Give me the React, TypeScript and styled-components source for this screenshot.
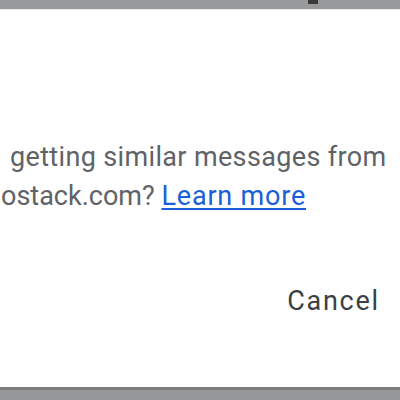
import React from "react";
import styled, { createGlobalStyle } from "styled-components";

const Global = createGlobalStyle`
  html, body { margin: 0; padding: 0; background: #ffffff; }
  body { font-family: Roboto, "Noto Sans", Arial, sans-serif; }
`;

const Page = styled.div`
  width: 400px;
  height: 400px;
  overflow: hidden;
  display: flex;
  flex-direction: column;
  background: #ffffff;
`;

const TopBar = styled.div`
  height: 9px;
  flex: none;
  background: #98999b;
  position: relative;
  border-bottom: 1px solid #e6e6e6;
`;

const TopMark = styled.div`
  position: absolute;
  left: 308px;
  top: 0;
  width: 10px;
  height: 4px;
  background: #3a3a3a;
`;

const Dialog = styled.div`
  flex: 1;
  display: flex;
  flex-direction: column;
  background: #ffffff;
`;

const Message = styled.div`
  margin-top: 128px;
  display: flex;
  flex-direction: column;
  font-size: 27px;
  line-height: 39px;
  color: #5f6368;
  white-space: nowrap;
`;

const Line = styled.div<{ $indent: number; $spacing: number }>`
  padding-left: ${(p) => p.$indent}px;
  letter-spacing: ${(p) => p.$spacing}px;
`;

const Link = styled.a`
  color: #1a5fd9;
  text-decoration: underline;
  text-decoration-thickness: 2px;
  text-underline-offset: 3px;
  letter-spacing: 0.8px;
`;

const Actions = styled.div`
  margin-top: 66px;
  display: flex;
  justify-content: flex-end;
  padding-right: 22px;
`;

const CancelButton = styled.button`
  border: none;
  background: transparent;
  padding: 0;
  font-family: Roboto, "Noto Sans", Arial, sans-serif;
  font-size: 27px;
  line-height: 39px;
  letter-spacing: 1.7px;
  margin-right: -1.7px;
  color: #3c4043;
  cursor: pointer;
`;

const BottomBar = styled.div`
  height: 13px;
  flex: none;
  background: #97989a;
  border-top: 3px solid #7c7d7f;
  box-sizing: border-box;
`;

export default function App() {
  return (
    <>
      <Global />
      <Page>
        <TopBar>
          <TopMark />
        </TopBar>
        <Dialog>
          <Message>
            <Line $indent={10} $spacing={0.35}>getting similar messages from</Line>
            <Line $indent={1} $spacing={0}>
              ostack.com? <Link href="#">Learn more</Link>
            </Line>
          </Message>
          <Actions>
            <CancelButton>Cancel</CancelButton>
          </Actions>
        </Dialog>
        <BottomBar />
      </Page>
    </>
  );
}
